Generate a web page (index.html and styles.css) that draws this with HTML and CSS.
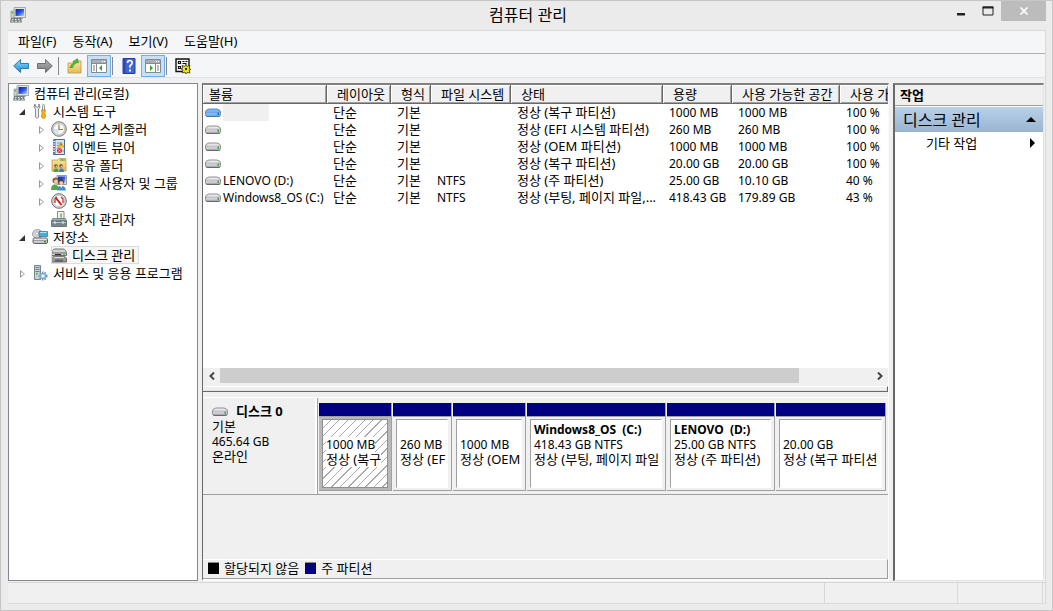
FILE: index.html
```html
<!DOCTYPE html>
<html lang="ko">
<head>
<meta charset="utf-8">
<title>컴퓨터 관리</title>
<link rel="stylesheet" href="styles.css">
</head>
<body>
<svg class="defs" aria-hidden="true">
  <defs>
    <linearGradient id="gBlue" x1="0" y1="0" x2="1" y2="1"><stop offset="0" stop-color="#0a1fb4"/><stop offset=".5" stop-color="#2b50e0"/><stop offset="1" stop-color="#b9d6fa"/></linearGradient>
    <linearGradient id="gArrow" x1="0" y1="0" x2="0" y2="1"><stop offset="0" stop-color="#8fe0fb"/><stop offset="1" stop-color="#1b86d6"/></linearGradient>
    <linearGradient id="gGrey" x1="0" y1="0" x2="0" y2="1"><stop offset="0" stop-color="#b5b5b5"/><stop offset="1" stop-color="#777"/></linearGradient>
    <linearGradient id="gDrive" x1="0" y1="0" x2="0" y2="1"><stop offset="0" stop-color="#f2f2f4"/><stop offset="1" stop-color="#b9b9c2"/></linearGradient>
    <linearGradient id="gFolder" x1="0" y1="0" x2="0" y2="1"><stop offset="0" stop-color="#fbe7a0"/><stop offset="1" stop-color="#e3b95a"/></linearGradient>
  </defs>
  <symbol id="computer" viewBox="0 0 16 16">
    <path d="M4 .5h11.500v10H4z" fill="#e4e6e4" stroke="#a6aaa4"/>
    <path d="M5.500 2H14v7H5.500z" fill="url(#gBlue)"/>
    <path d="M9 10.500h3l1 1.500H8z" fill="#999"/>
    <path d="M1 4h3v7H1z" fill="#cfd5cb" stroke="#8e968a" stroke-width=".7"/>
    <path d="M1.500 5h1.500v1.500H1.500z" fill="#5bb63a"/>
    <path d="M1 11h10l1 4.500H0z" fill="#6e7c80"/>
    <path d="M2 12.500h1.500M5 12.500h1.500M8 12.500h1.500M1.500 14.200h2M5 14.200h2M8.500 14.200h2" stroke="#e8eeee"/>
  </symbol>
  <symbol id="tools" viewBox="0 0 16 16">
    <path d="M3 1 2 4l1.500 2V14q1.500 3 3 0V6L8 4 7 1 6.500 4h-3z" fill="#eceff0" stroke="#7c8083" stroke-width=".9"/>
    <path d="M10.500 7V2.500L11.500 1l1 1.500V7" fill="#eee" stroke="#888" stroke-width=".8"/>
    <path d="M9.500 7h4l-.6 3 .8 4q-2.200 3-4.400 0l.8-4z" fill="#f5b31a" stroke="#bd7d08" stroke-width=".7"/>
  </symbol>
  <symbol id="clock" viewBox="0 0 16 16">
    <circle cx="8" cy="8" r="7.300" fill="#d6d6d6" stroke="#787878"/>
    <circle cx="8" cy="8" r="5.500" fill="#f7fbff" stroke="#aaa" stroke-width=".6"/>
    <path d="M8 8v5.500A5.500 5.500 0 0 1 2.500 8z" fill="#d1e5f4"/>
    <path d="M8 3.500V8.500h4" fill="none" stroke="#a87434" stroke-width="1.200"/>
  </symbol>
  <symbol id="event" viewBox="0 0 16 16">
    <path d="M2.500.5h11v15h-11z" fill="#d7e2f0" stroke="#4b6b98"/>
    <path d="M2 1h2.500v14H2z" fill="#587caa"/>
    <path d="M1 2.500h3M1 5h3M1 7.500h3M1 10h3M1 12.500h3" stroke="#e3e8ee"/>
    <path d="M6 4h3M6 6.500h2M6 9h2M10 12h3" stroke="#889bb8"/>
    <path d="M10 3 13 8H7z" fill="#ffd633" stroke="#c79100" stroke-width=".6"/>
    <path d="M10 4.500v2" stroke="#333"/>
    <circle cx="8.500" cy="11.500" r="2.500" fill="#dc342b"/><path d="m7.500 10.500 2 2m0-2-2 2" stroke="#fff" stroke-width=".8"/>
  </symbol>
  <symbol id="share" viewBox="0 0 16 16">
    <path d="M1 3h6l1-1.500h7V14H1z" fill="url(#gFolder)" stroke="#c69b3c" stroke-width=".8"/>
    <path d="M9 3h5" stroke="#65ae4c" stroke-width="1.500"/>
    <circle cx="5" cy="9" r="1.700" fill="#5b3b23"/><circle cx="10" cy="9" r="1.700" fill="#5b3b23"/>
    <circle cx="5.400" cy="9.400" r="1" fill="#f0c9a0"/><circle cx="10.400" cy="9.400" r="1" fill="#f0c9a0"/>
    <path d="M2.500 15q0-4 2.800-3.500Q7.500 11 7.500 15z" fill="#49a04f"/><path d="M8 15q0-4 2.500-3.500Q13 11 13 15z" fill="#3b83bf"/>
  </symbol>
  <symbol id="users" viewBox="0 0 16 16">
    <path d="M6 .5h9.500v9H6z" fill="#e4e6e4" stroke="#999"/>
    <path d="M7 1.500h7.500v7H7z" fill="url(#gBlue)"/>
    <circle cx="4.500" cy="5.500" r="3" fill="#93602a"/><circle cx="5" cy="6.500" r="2" fill="#f3cc9e"/>
    <circle cx="10" cy="7" r="2.800" fill="#4a3a2c"/><circle cx="10.200" cy="8" r="2" fill="#f3cc9e"/>
    <path d="M0 15q0-6 4.500-5.500Q7 9.500 8 15z" fill="#55a84a"/><path d="M6 15.500q0-5 4-4.500 4.500-.5 5 4.500z" fill="#4a8cc8"/>
    <path d="m9 11 1.200 2 1-2z" fill="#fff"/>
  </symbol>
  <symbol id="perf" viewBox="0 0 16 16">
    <circle cx="8" cy="8" r="7.300" fill="#e3e3e3" stroke="#6b6b6b"/>
    <circle cx="8" cy="8" r="5.600" fill="#fff" stroke="#aaa" stroke-width=".6"/>
    <path d="M4 10V6l2-2M12 10V6l-2-2" fill="none" stroke="#c63232" stroke-width="1.300"/>
    <path d="m4.500 4.500 6 7.500" stroke="#d41d1d" stroke-width="2"/>
  </symbol>
  <symbol id="device" viewBox="0 0 16 16">
    <path d="M6.500.5h6.500v7H6.500z" fill="#f2f7f1" stroke="#898989"/><path d="M10 2.500v4" stroke="#61ad43" stroke-width="1.500"/>
    <path d="M1.500 7.500h13l1 2.500H.5z" fill="#a4b0b6" stroke="#6b757a" stroke-width=".7"/>
    <path d="M.5 10h15v5.500H.5z" fill="#76858c" stroke="#59656b" stroke-width=".8"/>
    <path d="M1 11.500h14" stroke="#bdc8cc"/><path d="M4 10v3M12 10v3" stroke="#e8eef0"/>
  </symbol>
  <symbol id="storage" viewBox="0 0 16 16">
    <ellipse cx="5.500" cy="5" rx="5" ry="4.500" fill="#d3d7d8" stroke="#899094" stroke-width=".8"/><circle cx="5" cy="4.500" r="1.500" fill="#fff" stroke="#999" stroke-width=".6"/>
    <path d="M7 2.500h8.500v5H7z" fill="#45aee0" stroke="#4f7990" stroke-width=".8"/><path d="M8 3.500h6.500" stroke="#a9e1fa"/>
    <path d="M2.500 9q-1.500 0-1.500 2v2q0 1.500 1.500 1.500h11.500q1.500 0 1.500-1.500v-2q0-2-1.500-2z" fill="url(#gDrive)" stroke="#555" stroke-width=".9"/>
    <path d="M1 11.500h14" stroke="#777" stroke-width=".6"/><path d="M12 12h2v1.500h-2z" fill="#28ad20"/>
  </symbol>
  <symbol id="diskmgr" viewBox="0 0 16 16">
    <path d="M4 2h8q1.500 0 2.500 1.500l1 2v3H.5v-3l1-2Q2.500 2 4 2z" fill="#d2d2d2" stroke="#666" stroke-width=".9"/>
    <path d="M1 6h14" stroke="#666"/><path d="M4 7.500h6" stroke="#333"/><path d="M12 6.500h2v1h-2z" fill="#26b91e"/>
    <path d="M4 9h8q1.500 0 2.500 1.200l1 1.300v3.500H.5v-3.500l1-1.300Q2.500 9 4 9z" fill="#999" stroke="#606060" stroke-width=".9"/>
    <path d="M3 10.500h10" stroke="#ddd"/><path d="M4 12.500h8v2.500H4z" fill="#666"/>
  </symbol>
  <symbol id="services" viewBox="0 0 16 16">
    <path d="M2.500.5h6v14h-6z" fill="#c6d0d5" stroke="#77868e"/>
    <path d="M3.500 2.500h4M3.500 4.500h4M3.500 6.500h4" stroke="#657780" stroke-width=".9"/><path d="M4 8h1.500v1.500H4z" fill="#42ae35"/>
    <circle cx="11" cy="11" r="3.500" fill="#d9e9f5" stroke="#6c9abb" stroke-width="2" stroke-dasharray="1.500 1"/>
    <circle cx="11" cy="11" r="2.700" fill="#b7d2e6" stroke="#6795b7" stroke-width=".7"/><circle cx="11" cy="11" r="1" fill="#fff"/>
  </symbol>
  <symbol id="drive" viewBox="0 0 16 10">
    <path d="M4 1h8q3.500.8 3.500 3v2.500q0 2-2 2h-11q-2 0-2-2V4Q.5 1.800 4 1z" fill="url(#gDrive)" stroke="#85858a" stroke-width=".9"/>
    <path d="M1 4.200h14" stroke="#aaaab2" stroke-width=".7"/><path d="M1.500 8.300h13" stroke="#606066"/><path d="M12.500 4.500h1.500v2.500h-1.500z" fill="#36b12b"/>
  </symbol>
  <symbol id="driveSel" viewBox="0 0 16 10">
    <path d="M4 1h8q3.500.8 3.500 3v2.500q0 2-2 2h-11q-2 0-2-2V4Q.5 1.800 4 1z" fill="#7fb8f2" stroke="#4a82c2" stroke-width=".9"/>
    <path d="M1 4.200h14" stroke="#5f9ad8" stroke-width=".7"/><path d="M1.500 8.300h13" stroke="#3b74b3"/><path d="M12.500 4.500h1.500v2.500h-1.500z" fill="#256f9b"/>
  </symbol>
  <symbol id="back" viewBox="0 0 16 16"><path d="M.7 8 7.500 1.500v4h8v5h-8v4z" fill="url(#gArrow)" stroke="#2070ad" stroke-width=".9"/></symbol>
  <symbol id="forward" viewBox="0 0 16 16"><path d="M15.300 8 8.500 1.500v4h-8v5h8v4z" fill="url(#gGrey)" stroke="#666" stroke-width=".9"/></symbol>
  <symbol id="up" viewBox="0 0 16 16">
    <path d="M1 5h5l1.500-2H14v12H1z" fill="url(#gFolder)" stroke="#c3983b" stroke-width=".8"/>
    <path d="M3 9.500q1-3.500 4-4.500L6 3.500 10.500.8 11.500 5l-1.500-.5Q6.500 6 5.500 9.500z" fill="#51bf36" stroke="#298a1d" stroke-width=".6"/>
  </symbol>
  <symbol id="treepane" viewBox="0 0 16 16">
    <path d="M.5 1.500h15v13H.5z" fill="#fff" stroke="#858b92"/><path d="M1 2h14v3H1z" fill="#aaaeb3"/><path d="M11 3.500h1M13 3.500h1" stroke="#fff"/>
    <path d="M5.500 5v9.500M1 5.500h14" stroke="#858b92"/><path d="M2 8h2M2 10h2M2 12h2" stroke="#777"/>
    <path d="M11 7v6L8 10z" fill="#35a529"/>
  </symbol>
  <symbol id="actionpane" viewBox="0 0 16 16">
    <path d="M.5 1.500h15v13H.5z" fill="#fff" stroke="#858b92"/><path d="M1 2h14v3H1z" fill="#aaaeb3"/><path d="M11 3.500h1M13 3.500h1" stroke="#fff"/>
    <path d="M10.500 5v9.500M1 5.500h14" stroke="#858b92"/><path d="M12 8h2M12 10h2M12 12h2" stroke="#777"/>
    <path d="M5 7v6l3-3z" fill="#35a529"/>
  </symbol>
  <symbol id="help" viewBox="0 0 16 16">
    <path d="M2 .5h12v15H2z" fill="#4165d2" stroke="#26409a"/><path d="M2.500 1h2v14h-2z" fill="#2946a8"/>
    <path d="M6.500 5q0-2.500 2.300-2.500 2.400 0 2.400 2.300 0 1.500-2.300 3v2" fill="none" stroke="#fff" stroke-width="1.600"/><path d="M8 11.500h2v2H8z" fill="#fff"/>
  </symbol>
  <symbol id="settings" viewBox="0 0 16 16">
    <path d="M1 1h13v12.500H1z" fill="#f4f4f4" stroke="#111" stroke-width="1.400"/>
    <path d="M3.500 3.500h2v2h-2zM3.500 8.500h2v2h-2z" fill="#fff" stroke="#111" stroke-width="1.200"/><path d="M7.500 3.500h2M10.500 3.500h2M7.500 5.500h4M7 8.500h1.500" stroke="#111" stroke-width="1.200"/>
    <path d="m11 6 1 2.500 3-1-1 3 2 1-2 1 1 2.500-3-.5-1 1.500-1-2-3 1 1-3-2-1 2-1-1-2.500 3 1z" fill="#ffed00" stroke="#222" stroke-width=".7"/>
    <circle cx="11" cy="11" r="1.200" fill="#222"/>
  </symbol>
</svg>

<div class="window">
  <header class="titlebar">
    <svg class="icon"><use href="#computer"/></svg>
    <h1 class="title">컴퓨터 관리</h1>
    <div class="caption-buttons">
      <button class="caption" aria-label="최소화"><svg width="10" height="10" viewBox="0 0 10 10"><path d="M1 7h8v2.500H1z" fill="#222"/></svg></button>
      <button class="caption" aria-label="최대화"><svg width="12" height="10" viewBox="0 0 12 10"><path d="M1 1h10v8H1z" fill="none" stroke="#222"/><path d="M.5 1.500h11" stroke="#222" stroke-width="2"/></svg></button>
      <button class="caption close" aria-label="닫기"><svg width="10" height="8" viewBox="0 0 10 8"><path d="m1.500.5 7 7m0-7-7 7" stroke="#fff" stroke-width="1.700"/></svg></button>
    </div>
  </header>

  <div class="frame">
    <nav class="menubar">
      <button class="menu">파일(F)</button>
      <button class="menu">동작(A)</button>
      <button class="menu">보기(V)</button>
      <button class="menu">도움말(H)</button>
    </nav>
    <div class="toolbar">
      <button class="tool" aria-label="뒤로"><svg class="icon"><use href="#back"/></svg></button>
      <button class="tool" aria-label="앞으로"><svg class="icon"><use href="#forward"/></svg></button>
      <span class="sep"></span>
      <button class="tool" aria-label="한 수준 위로"><svg class="icon"><use href="#up"/></svg></button>
      <button class="tool on" aria-label="콘솔 트리 표시"><svg class="icon"><use href="#treepane"/></svg></button>
      <span class="sep"></span>
      <button class="tool" aria-label="도움말"><svg class="icon"><use href="#help"/></svg></button>
      <button class="tool on" aria-label="작업 창 표시"><svg class="icon"><use href="#actionpane"/></svg></button>
      <span class="sep"></span>
      <button class="tool" aria-label="설정"><svg class="icon"><use href="#settings"/></svg></button>
    </div>

    <main class="panes">
      <ul class="tree">
        <li><a class="node root" href="#"><svg class="icon"><use href="#computer"/></svg><span class="label">컴퓨터 관리(로컬)</span></a></li>
        <li><a class="node" href="#"><span class="twist open"></span><svg class="icon"><use href="#tools"/></svg><span class="label">시스템 도구</span></a>
          <ul class="branch">
            <li><a class="node" href="#"><span class="twist"></span><svg class="icon"><use href="#clock"/></svg><span class="label">작업 스케줄러</span></a></li>
            <li><a class="node" href="#"><span class="twist"></span><svg class="icon"><use href="#event"/></svg><span class="label">이벤트 뷰어</span></a></li>
            <li><a class="node" href="#"><span class="twist"></span><svg class="icon"><use href="#share"/></svg><span class="label">공유 폴더</span></a></li>
            <li><a class="node" href="#"><span class="twist"></span><svg class="icon"><use href="#users"/></svg><span class="label">로컬 사용자 및 그룹</span></a></li>
            <li><a class="node" href="#"><span class="twist"></span><svg class="icon"><use href="#perf"/></svg><span class="label">성능</span></a></li>
            <li><a class="node" href="#"><span class="twist none"></span><svg class="icon"><use href="#device"/></svg><span class="label">장치 관리자</span></a></li>
          </ul>
        </li>
        <li><a class="node" href="#"><span class="twist open"></span><svg class="icon"><use href="#storage"/></svg><span class="label">저장소</span></a>
          <ul class="branch">
            <li><a class="node" href="#"><span class="twist none"></span><span class="selected"><svg class="icon"><use href="#diskmgr"/></svg><span class="label">디스크 관리</span></span></a></li>
          </ul>
        </li>
        <li><a class="node" href="#"><span class="twist"></span><svg class="icon"><use href="#services"/></svg><span class="label">서비스 및 응용 프로그램</span></a></li>
      </ul>

      <section class="center">
        <div class="volumes">
          <table class="list">
            <colgroup><col class="c-vol"><col class="c-layout"><col class="c-type"><col class="c-fs"><col class="c-state"><col class="c-cap"><col class="c-free"><col></colgroup>
            <thead><tr><th>볼륨</th><th>레이아웃</th><th>형식</th><th>파일 시스템</th><th>상태</th><th>용량</th><th>사용 가능한 공간</th><th>사용 가</th></tr></thead>
            <tbody>
              <tr><td><span class="vol"><svg class="drive"><use href="#driveSel"/></svg><span class="blank"></span></span></td><td class="ko">단순</td><td class="ko">기본</td><td></td><td class="ko">정상 (복구 파티션)</td><td>1000 MB</td><td>1000 MB</td><td>100 %</td></tr>
              <tr><td><span class="vol"><svg class="drive"><use href="#drive"/></svg></span></td><td class="ko">단순</td><td class="ko">기본</td><td></td><td class="ko">정상 (EFI 시스템 파티션)</td><td>260 MB</td><td>260 MB</td><td>100 %</td></tr>
              <tr><td><span class="vol"><svg class="drive"><use href="#drive"/></svg></span></td><td class="ko">단순</td><td class="ko">기본</td><td></td><td class="ko">정상 (OEM 파티션)</td><td>1000 MB</td><td>1000 MB</td><td>100 %</td></tr>
              <tr><td><span class="vol"><svg class="drive"><use href="#drive"/></svg></span></td><td class="ko">단순</td><td class="ko">기본</td><td></td><td class="ko">정상 (복구 파티션)</td><td>20.00 GB</td><td>20.00 GB</td><td>100 %</td></tr>
              <tr><td><span class="vol"><svg class="drive"><use href="#drive"/></svg>LENOVO (D:)</span></td><td class="ko">단순</td><td class="ko">기본</td><td>NTFS</td><td class="ko">정상 (주 파티션)</td><td>25.00 GB</td><td>10.10 GB</td><td>40 %</td></tr>
              <tr><td><span class="vol"><svg class="drive"><use href="#drive"/></svg>Windows8_OS (C:)</span></td><td class="ko">단순</td><td class="ko">기본</td><td>NTFS</td><td class="ko">정상 (부팅, 페이지 파일,...</td><td>418.43 GB</td><td>179.89 GB</td><td>43 %</td></tr>
            </tbody>
          </table>
          <div class="scrollbar">
            <button class="scroll" aria-label="왼쪽"><svg width="8" height="8" viewBox="0 0 8 8"><path d="M6 .5 2.500 4 6 7.500" fill="none" stroke="#444" stroke-width="2"/></svg></button>
            <div class="track"><div class="thumb"></div></div>
            <button class="scroll" aria-label="오른쪽"><svg width="8" height="8" viewBox="0 0 8 8"><path d="M2 .5 5.500 4 2 7.500" fill="none" stroke="#444" stroke-width="2"/></svg></button>
          </div>
        </div>
        <div class="splitter"></div>
        <div class="disks">
          <div class="disk">
            <div class="disk-info">
              <strong class="disk-name"><svg class="drive"><use href="#drive"/></svg>디스크 0</strong>
              <span class="ko">기본</span><span>465.64 GB</span><span class="ko">온라인</span>
            </div>
            <div class="parts">
              <div class="part hatched"><div class="box"><b></b><span>1000 MB</span><span class="ko">정상 (복구</span></div></div>
              <div class="part"><div class="box"><b></b><span>260 MB</span><span class="ko">정상 (EF</span></div></div>
              <div class="part"><div class="box"><b></b><span>1000 MB</span><span class="ko">정상 (OEM</span></div></div>
              <div class="part"><div class="box"><b>Windows8_OS&nbsp; (C:)</b><span>418.43 GB NTFS</span><span class="ko">정상 (부팅, 페이지 파일</span></div></div>
              <div class="part"><div class="box"><b>LENOVO&nbsp; (D:)</b><span>25.00 GB NTFS</span><span class="ko">정상 (주 파티션)</span></div></div>
              <div class="part"><div class="box"><b></b><span>20.00 GB</span><span class="ko">정상 (복구 파티션</span></div></div>
            </div>
          </div>
          <div class="legend">
            <span class="key black"></span><span>할당되지 않음</span>
            <span class="key navy"></span><span>주 파티션</span>
          </div>
        </div>
      </section>

      <aside class="actions">
        <h2 class="actions-head">작업</h2>
        <button class="actions-group"><span>디스크 관리</span><svg width="10" height="5" viewBox="0 0 10 5"><path d="M0 5 5 0l5 5z"/></svg></button>
        <button class="actions-item"><span>기타 작업</span><svg width="5" height="10" viewBox="0 0 5 10"><path d="m0 0 5 5-5 5z"/></svg></button>
      </aside>
    </main>
    <footer class="status"><span class="s-main"></span><span class="s-mid"></span><span class="s-end"></span></footer>
  </div>
</div>
</body>
</html>
```
FILE: styles.css
```css
* { box-sizing: border-box; }
body {
  margin: 0;
  font-family: "Noto Sans", "Noto Sans CJK KR", sans-serif;
  font-size: 13px;
  line-height: 18px;
  color: #000;
  background: #ebebeb;
}
button {
  margin: 0;
  padding: 0;
  border: 0;
  background: none;
  font: inherit;
  color: inherit;
}
ul { margin: 0; padding: 0; list-style: none; }
a { color: inherit; text-decoration: none; }
.defs { position: absolute; width: 0; height: 0; }
.icon { flex: none; width: 16px; height: 16px; }
.drive { flex: none; width: 16px; height: 10px; }

.window {
  display: flex;
  flex-direction: column;
  min-height: 100vh;
  padding: 0 6px 6px 7px;
  border: 1px solid #c6c6c6;
}
.titlebar {
  display: grid;
  grid-template-columns: 1fr auto 1fr;
  height: 29px;
  padding-left: 2px;
}
.titlebar .icon { margin-top: 6px; }
.title { margin: 0; font-size: 16px; font-weight: 400; line-height: 28px; }
.caption-buttons { display: flex; justify-content: flex-end; align-items: flex-start; }
.caption { display: flex; align-items: center; justify-content: center; width: 27px; height: 20px; }
.caption.close { width: 45px; background: #bcbcbc; }

.frame {
  flex: 1;
  display: flex;
  flex-direction: column;
  border: 1px solid #dadada;
  border-width: 1px 1px 1px 0;
  background: #f0f0f0;
}
.menubar {
  display: flex;
  gap: 16px;
  height: 23px;
  padding: 0 0 2px 10px;
  border-bottom: 1px solid #aeb0b2;
  background: #f5f6f7;
}
.toolbar {
  display: flex;
  align-items: center;
  height: 24px;
  padding-left: 1px;
  border-bottom: 1px solid #e3e4e5;
  background: #f5f6f7;
}
.tool { display: flex; align-items: center; justify-content: center; width: 24px; height: 22px; }
.tool.on { border: 1px solid #70b0e8; background: #c5e0f7; }
.sep { width: 1px; height: 18px; margin: 0 4px 0 1px; background: #888; }

.panes {
  flex: 1;
  display: grid;
  grid-template-columns: 190px 1fr 151px;
  gap: 4px;
  padding: 5px 1px 1px 0;
}
.tree { border: 1px solid #82878f; background: #fff; }
.node { display: flex; align-items: center; height: 18px; padding-left: 8px; white-space: nowrap; }
.node.root { padding-left: 4px; }
.node .icon { margin-right: 5px; }
.branch { padding-left: 19px; }
.twist {
  flex: none;
  width: 15px;
  height: 8px;
  margin-top: 2px;
  background: #999;
  clip-path: polygon(3px 0, 8px 4px, 3px 8px, 3px 6px, 4px 6px, 7px 4px, 4px 2px, 4px 6px, 3px 6px);
}
.twist.open { background: #333; clip-path: polygon(8px 1px, 8px 7px, 2px 7px); }
.twist.none { background: none; }
.selected { display: flex; align-items: center; height: 18px; padding-right: 4px; outline: 1px solid #dcdcdc; outline-offset: -1px; background: #f5f5f5; }

.center {
  display: flex;
  flex-direction: column;
  min-width: 0;
  border: 1px solid #696969;
  border-width: 2px 1px 2px 1px;
  border-color: #808080 #fafafa #fafafa #696969;
}
.volumes { flex: 301 0 0; display: flex; flex-direction: column; justify-content: space-between; overflow: hidden; background: #fff; }
.list { width: 100%; table-layout: fixed; border-collapse: separate; border-spacing: 0; font-size: 12px; line-height: 17px; }
.c-vol { width: 124px; }
.c-layout { width: 64px; }
.c-type { width: 40px; }
.c-fs { width: 80px; }
.c-state { width: 152px; }
.c-cap { width: 69px; }
.c-free { width: 108px; }
.list th {
  height: 19px;
  padding: 0 0 0 10px;
  border-right: 1px solid #696969;
  border-bottom: 1px solid #696969;
  box-shadow: inset 1px 1px #fff, inset -1px -1px #a0a0a0;
  background: #f0f0f0;
  font-size: 13px;
  font-weight: 400;
  text-align: left;
  white-space: nowrap;
}
.list th:first-child { padding-left: 6px; }
.list th:last-child { border-right: 0; }
.list td { height: 17px; padding: 0 0 0 6px; white-space: nowrap; overflow: hidden; }
.list td:first-child { padding-left: 2px; }
.list .ko, .disks .ko { font-size: 13px; }
.vol { display: flex; align-items: center; gap: 2px; height: 17px; }
.blank { width: 46px; height: 17px; background: #f0f0f0; }
.scrollbar { display: flex; height: 18px; background: #f0f0f0; }
.scroll { display: flex; align-items: center; justify-content: center; width: 17px; height: 15px; }
.track { flex: 1; height: 15px; }
.thumb { width: 89%; height: 15px; background: #cdcdcd; }
.splitter { height: 6px; border-top: 1px solid #fff; border-right: 1px solid #696969; border-bottom: 1px solid #696969; box-shadow: inset -1px -1px #e3e3e3; }

.disks { flex: 182 0 0; display: flex; flex-direction: column; padding-top: 5px; }
.disk { display: flex; height: 98px; border-top: 1px solid #fff; border-bottom: 1px solid #a0a0a0; }
.disk-info {
  flex: none;
  display: flex;
  flex-direction: column;
  width: 115px;
  padding: 6px 0 0 9px;
  border-right: 1px solid #a0a0a0;
  box-shadow: inset -2px 0 #fff;
  font-size: 12px;
  line-height: 15px;
}
.disk-name { display: flex; align-items: center; gap: 8px; font-size: 13px; }
.parts {
  flex: 1;
  display: grid;
  grid-template-columns: minmax(0, 72fr) minmax(0, 58fr) minmax(0, 72fr) minmax(0, 138fr) minmax(0, 107fr) minmax(0, 109fr);
  gap: 2px;
  min-width: 0;
  padding: 5px 3px 3px 1px;
}
.part {
  padding: 3px 3px 2px;
  border-top: 13px solid #000080;
  border-bottom: 1px solid #a0a0a0;
  box-shadow: inset 0 1px #a0a0a0, 1px 0 #a0a0a0;
}
.box {
  display: flex;
  flex-direction: column;
  height: 100%;
  padding: 2px 3px;
  border: 1px solid #fff;
  border-top-color: #a0a0a0;
  border-left-color: #a0a0a0;
  background: #fff;
  font-size: 12px;
  line-height: 15px;
  white-space: nowrap;
  overflow: hidden;
}
.box b { height: 15px; }
.box span { align-self: flex-start; }
.hatched { background: #b8b8b8; }
.hatched .box { border-color: #909090; background: repeating-linear-gradient(135deg, #fff 0 5px, #aaa 5px 6px); }
.hatched span { background: #fff; }
.legend {
  display: flex;
  align-items: center;
  height: 20px;
  margin-top: auto;
  padding: 0 0 2px 5px;
  border: 1px solid #a0a0a0;
  border-width: 1px 1px 1px 0;
  border-top-color: #fff;
}
.key { width: 11px; height: 12px; margin-right: 5px; border-top: 1px solid #888; }
.black { background: #000; }
.navy { margin-left: 6px; background: #000080; }

.actions {
  border: 2px solid #808080;
  border-width: 2px 1px 1px 2px;
  border-color: #808080 #e3e3e3 #e3e3e3 #696969;
  background: #fff;
}
.actions-head { margin: 0; padding-left: 5px; border-bottom: 1px solid #a0a0a0; background: #f0f0f0; font-size: 13px; line-height: 20px; }
.actions-group, .actions-item { display: flex; align-items: center; justify-content: space-between; width: 100%; }
.actions-group { height: 25px; margin-top: 1px; padding: 0 7px 0 8px; background: linear-gradient(#b9d1ea, #99b4d1); font-size: 16px; }
.actions-item { height: 22px; padding: 0 8px 0 31px; }

.status { display: flex; height: 21px; border-top: 1px solid #d7d7d7; }
.status span { border-right: 1px solid #d7d7d7; }
.s-main { flex: 1; }
.s-mid { width: 133px; }
.s-end { width: 85px; margin-right: 2px; }
```
